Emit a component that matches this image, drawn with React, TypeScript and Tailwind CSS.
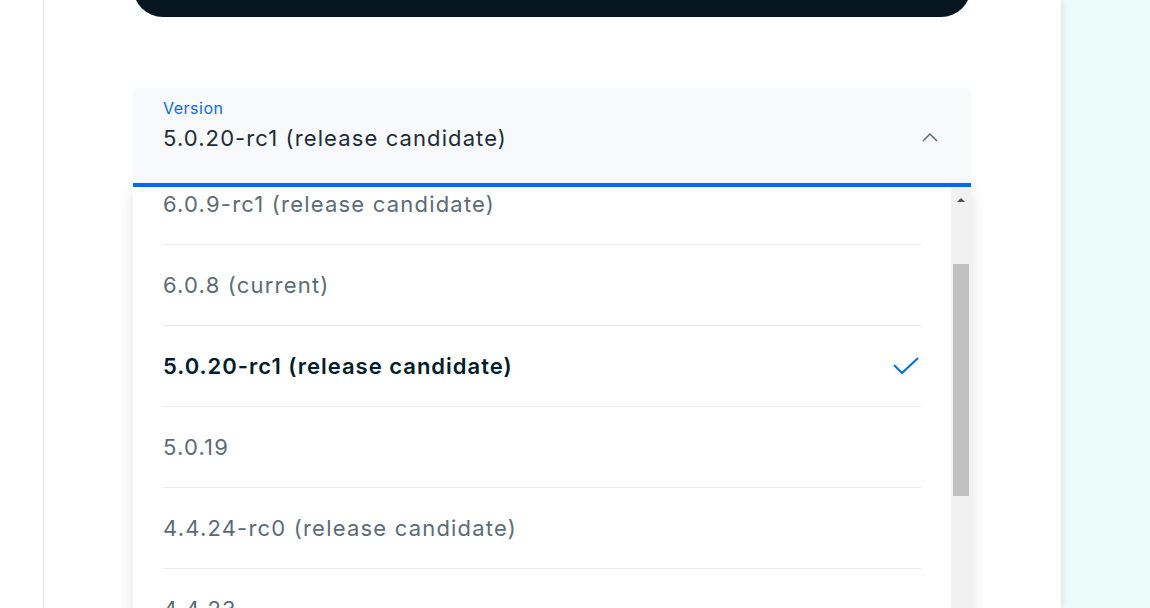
import React from "react";

const items = [
  { label: "6.0.9-rc1 (release candidate)" },
  { label: "6.0.8 (current)" },
  { label: "5.0.20-rc1 (release candidate)", selected: true },
  { label: "5.0.19" },
  { label: "4.4.24-rc0 (release candidate)" },
  { label: "4.4.23" },
];

export default function App() {
  return (
    <div
      className="flex h-[608px] w-[1150px] overflow-hidden bg-white"
      style={{ fontFamily: "Inter, 'Noto Sans', sans-serif" }}
    >
      <div className="w-[43px] shrink-0 bg-white" />
      <div className="relative z-10 w-[1018px] shrink-0 border-l border-[#e6e8ea] bg-white shadow-[2px_0_6px_rgba(0,0,0,0.08)]">
        <div className="ml-[89px] w-[838px]">
          <div className="-mt-[43px] h-[60px] rounded-[34px] bg-[#061621]" />
          <div className="relative mt-[71px]">
            <div className="flex h-[95px] items-start rounded-t-[4px] bg-[#f8f9fb] pl-[30px] pr-[33px] pt-[10px]">
              <div className="flex-1">
                <div className="text-[16px] leading-[20px] tracking-[0.5px] text-[#016bf8]">Version</div>
                <div className="mt-[6px] text-[22px] leading-[28px] tracking-[1.1px] text-[#1c2d38]">
                  5.0.20-rc1 (release candidate)
                </div>
              </div>
              <svg width="16" height="10" viewBox="0 0 16 10" className="ml-[1px] mt-[34px]">
                <path d="M1 9 L8 2 L15 9" fill="none" stroke="#5c6c75" strokeWidth="1.5" />
              </svg>
            </div>
            <div className="h-[4px] bg-[#016bf8]" />
            <div className="absolute left-0 top-[99px] flex h-[430px] w-[838px] bg-white shadow-[0_4px_14px_rgba(0,0,0,0.12)]">
              <div className="flex-1 overflow-hidden">
                <div className="-mt-[23px] px-[30px]">
                  {items.map((it) => (
                    <div
                      key={it.label}
                      className="flex h-[81px] items-center justify-between border-b border-[#e8edeb]"
                    >
                      <span
                        className={
                          it.selected
                            ? "text-[22px] font-semibold tracking-[1px] text-[#001e2b]"
                            : "text-[22px] tracking-[1.2px] text-[#5c6c75]"
                        }
                      >
                        {it.label}
                      </span>
                      {it.selected && (
                        <svg width="26" height="18" viewBox="0 0 26 18" className="mr-[2px]">
                          <path d="M1 8 L9 16 L25 1" fill="none" stroke="#016bf8" strokeWidth="2" />
                        </svg>
                      )}
                    </div>
                  ))}
                </div>
              </div>
              <div className="flex w-[20px] flex-col items-center bg-[#f1f1f1]">
                <div className="flex h-[25px] w-full items-center justify-center">
                  <div className="h-0 w-0 border-x-[4px] border-b-[4px] border-x-transparent border-b-[#505050]" />
                </div>
                <div className="mt-[52px] h-[232px] w-[16px] bg-[#c1c1c1]" />
              </div>
            </div>
          </div>
        </div>
      </div>
      <div className="flex-1 bg-[#ebfbf7]" />
    </div>
  );
}
